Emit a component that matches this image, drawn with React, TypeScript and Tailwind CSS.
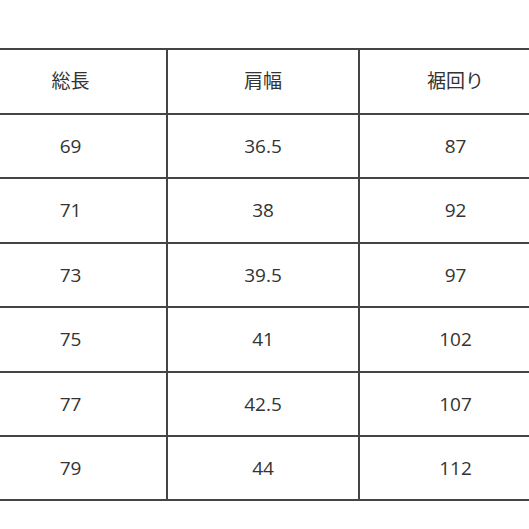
const HEADERS = ["総長", "肩幅", "裾回り"];

const ROWS = [
  ["69", "36.5", "87"],
  ["71", "38", "92"],
  ["73", "39.5", "97"],
  ["75", "41", "102"],
  ["77", "42.5", "107"],
  ["79", "44", "112"],
];

export default function App() {
  return (
    <div className="h-[529px] w-[529px] overflow-hidden bg-white pt-[48px] font-['Open_Sans','Noto_Sans_CJK_JP',sans-serif] text-[19px] text-[#333]">
      <table className="-ml-[25px] w-[576px] table-fixed border-collapse">
        <colgroup>
          <col className="w-[192px]" />
          <col className="w-[192px]" />
          <col className="w-[192px]" />
        </colgroup>
        <thead>
          <tr className="h-[65px]">
            {HEADERS.map((h, i) => (
              <th
                key={h}
                className={`border-y-2 border-[#444] text-center font-normal ${i > 0 ? "border-l-2" : ""}`}
              >
                {h}
              </th>
            ))}
          </tr>
        </thead>
        <tbody>
          {ROWS.map((row) => (
            <tr key={row[0]} className="h-[64.4px]">
              {row.map((cell, i) => (
                <td
                  key={i}
                  className={`border-y-2 border-[#444] text-center ${i > 0 ? "border-l-2" : ""}`}
                >
                  {cell}
                </td>
              ))}
            </tr>
          ))}
        </tbody>
      </table>
    </div>
  );
}
